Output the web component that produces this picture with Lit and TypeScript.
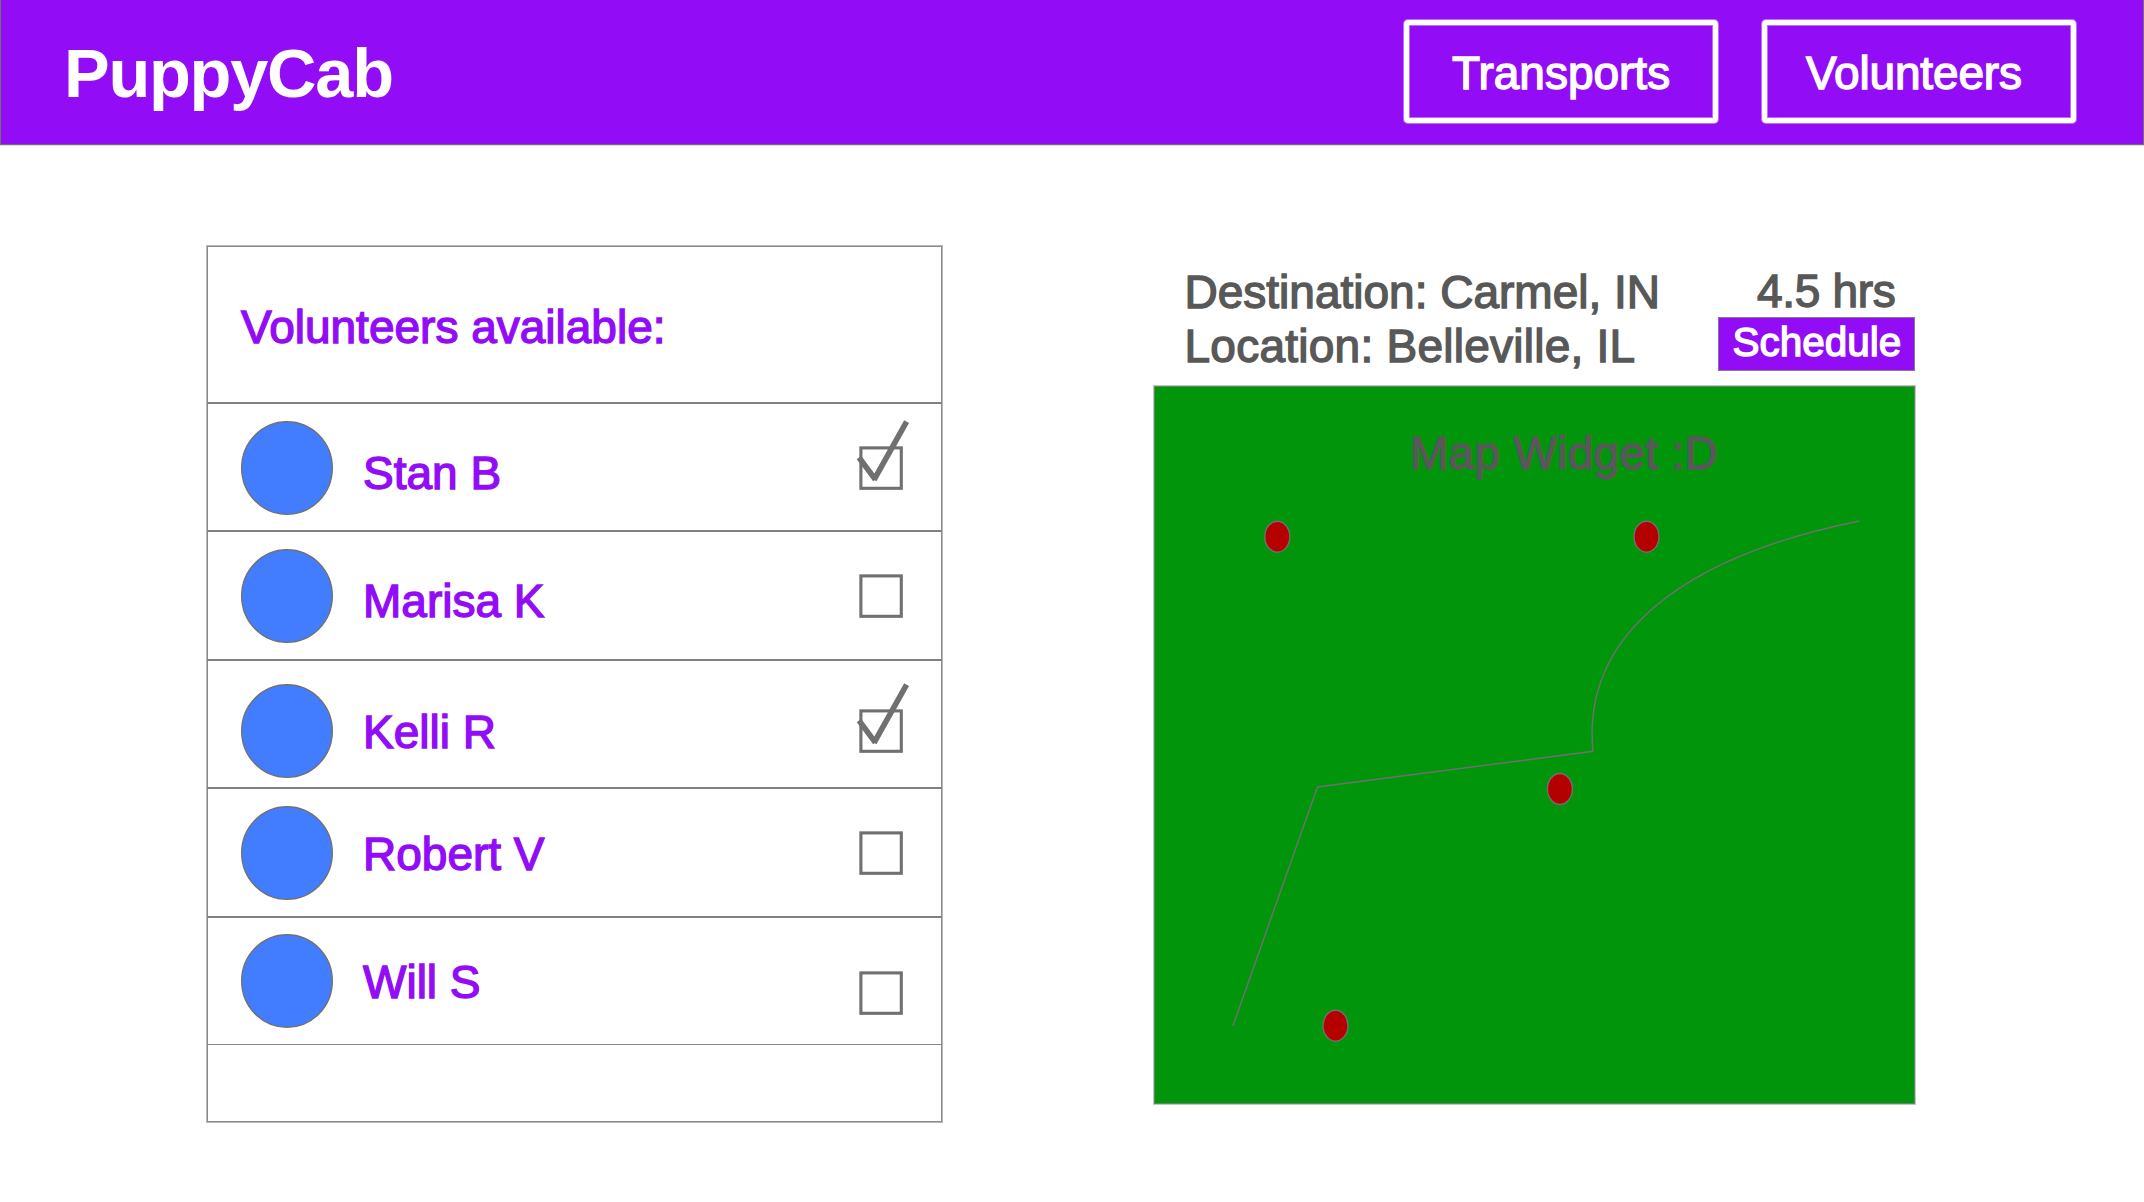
import { LitElement, html, css, svg } from "lit";
import { customElement } from "lit/decorators.js";

interface Volunteer {
  name: string;
  checked: boolean;
  avatarTop: number;
  nameTop: number;
  boxTop: number;
}

// Each volunteer's offsets, in pixels from the top of the row.
const volunteers: Volunteer[] = [
  { name: "Stan B", checked: true, avatarTop: 16.7, nameTop: 38.5, boxTop: 41.6 },
  { name: "Marisa K", checked: false, avatarTop: 16.7, nameTop: 38.5, boxTop: 41.6 },
  { name: "Kelli R", checked: true, avatarTop: 23.6, nameTop: 40.8, boxTop: 47.8 },
  { name: "Robert V", checked: false, avatarTop: 16.7, nameTop: 34.5, boxTop: 41.6 },
  { name: "Will S", checked: false, avatarTop: 16.7, nameTop: 34, boxTop: 53.8 },
];

const pins = [
  [124.3, 151.7],
  [493.5, 151.7],
  [406.9, 404],
  [182.5, 640.7],
];

@customElement("app-root")
export class AppRoot extends LitElement {
  static styles = css`
    :host {
      display: block;
      width: 2144px;
      height: 1202px;
      overflow: hidden;
      background: #fff;
      font-family: "Liberation Sans", Arial, sans-serif;
      font-size: 46px;
      line-height: 60px;
      color: #585858;
      -webkit-text-stroke: 1.4px currentColor;
    }
    * { box-sizing: border-box; }
    .bar {
      display: flex;
      align-items: flex-start;
      justify-content: space-between;
      height: 145px;
      padding: 20px 67px 0 63px;
      background: #920df6;
      border: solid #707070;
      border-width: 0 1px 1px 1px;
      box-shadow: 0 1px 0 #dcdcdc;
      color: #fff;
    }
    .logo {
      margin: 14px 0 0;
      font-size: 68.5px;
      line-height: 80px;
      font-weight: 700;
      letter-spacing: -1.25px;
      -webkit-text-stroke: 0;
    }
    .nav { display: flex; gap: 44px; }
    .nav-button {
      width: 314px;
      height: 103px;
      padding: 18px 0 0 43px;
      border: 5px solid #fff;
      border-radius: 4px;
      box-shadow: 0 0 0 1px rgba(255, 255, 255, 0.4), inset 0 0 0 1px rgba(255, 255, 255, 0.4);
    }
    .nav-button.second { padding-left: 39px; letter-spacing: -0.15px; }
    .content {
      display: flex;
      align-items: flex-start;
      gap: 211px;
      padding: 100px 0 0 206px;
    }
    .panel {
      width: 737px;
      height: 878px;
      border: 1px solid #b8b8b8;
      box-shadow: inset 0 0 0 1px #8a8a8a;
      color: #920df6;
    }
    .panel-head {
      height: 156px;
      padding: 51px 0 0 34px;
    }
    .row {
      display: flex;
      align-items: flex-start;
      height: 128.4px;
      padding: 0 39.5px 0 34px;
      border-top: 2px solid #808080;
    }
    .rows { border-bottom: 1px solid #8a8a8a; }
    .avatar { flex: none; width: 92px; height: 94px; display: block; }
    .name { flex: 1; padding-left: 30px; }
    .check { flex: none; width: 44px; height: 44px; display: block; overflow: visible; }
    .trip { width: 761px; padding-top: 41px; }
    .trip-head {
      display: flex;
      justify-content: space-between;
      align-items: flex-start;
      height: 100px;
      padding-left: 30.5px;
    }
    .line { line-height: 54px; white-space: nowrap; }
    .location { letter-spacing: 0.25px; }
    .side { width: 197px; margin-top: -22px; }
    .places { margin-top: -21px; }
    .hours { padding-left: 39px; letter-spacing: -0.3px; }
    .schedule {
      height: 54px;
      margin-top: -1px;
      padding-left: 13.5px;
      border: 1px solid #857a90;
      background: #920df6;
      color: #fff;
      font-size: 40.5px;
      line-height: 48px;
    }
    .map {
      position: relative;
      height: 718px;
      border: 1px solid #5a8a5d;
      box-shadow: 0 0 0 1px #c4c4c4;
      background: #01950b;
    }
    .map-title { padding: 36px 0 0 255px; white-space: nowrap; letter-spacing: 0.3px; }
    .route { position: absolute; left: -2px; top: -2px; width: 762px; height: 720px; }
  `;

  private avatar(top: number) {
    return html`<svg class="avatar" style="margin-top:${top}px" viewBox="0 0 92 94">
      <ellipse cx="46" cy="47" rx="45.3" ry="46.3" fill="#427dff" stroke="#707070" stroke-width="1.4"></ellipse>
    </svg>`;
  }

  private check(v: Volunteer) {
    return html`<svg class="check" style="margin-top:${v.boxTop}px" viewBox="0 0 44 44" fill="none" stroke="#707070">
      <rect x="1.9" y="1.9" width="40.4" height="40.4" stroke-width="3.1"></rect>
      ${v.checked
        ? svg`<path d="M0 11.5 16.4 33.6M15 33.8 47.6-24.3" stroke-width="5.6"></path>`
        : null}
    </svg>`;
  }

  render() {
    return html`
      <header class="bar">
        <h1 class="logo">PuppyCab</h1>
        <nav class="nav">
          <div class="nav-button">Transports</div>
          <div class="nav-button second">Volunteers</div>
        </nav>
      </header>
      <main class="content">
        <section class="panel">
          <div class="panel-head">Volunteers available:</div>
          <div class="rows">
            ${volunteers.map(
              (v) => html`<div class="row">
                ${this.avatar(v.avatarTop)}
                <div class="name" style="margin-top:${v.nameTop}px">${v.name}</div>
                ${this.check(v)}
              </div>`
            )}
          </div>
        </section>
        <section class="trip">
          <div class="trip-head">
            <div class="places">
              <div class="line">Destination: Carmel, IN</div>
              <div class="line location">Location: Belleville, IL</div>
            </div>
            <div class="side">
              <div class="line hours">4.5 hrs</div>
              <div class="schedule">Schedule</div>
            </div>
          </div>
          <div class="map">
            <div class="map-title">Map Widget :D</div>
            <svg class="route" viewBox="0 0 762 720" fill="none" stroke="#707070" stroke-width="1.4">
              <path d="M79.9 641 164.5 402 440 366.3C429 254 523 173 706.4 136"></path>
              ${pins.map(
                ([x, y]) => svg`<ellipse cx=${x} cy=${y} rx="12.5" ry="15.5" fill="#b50000"></ellipse>`
              )}
            </svg>
          </div>
        </section>
      </main>
    `;
  }
}
